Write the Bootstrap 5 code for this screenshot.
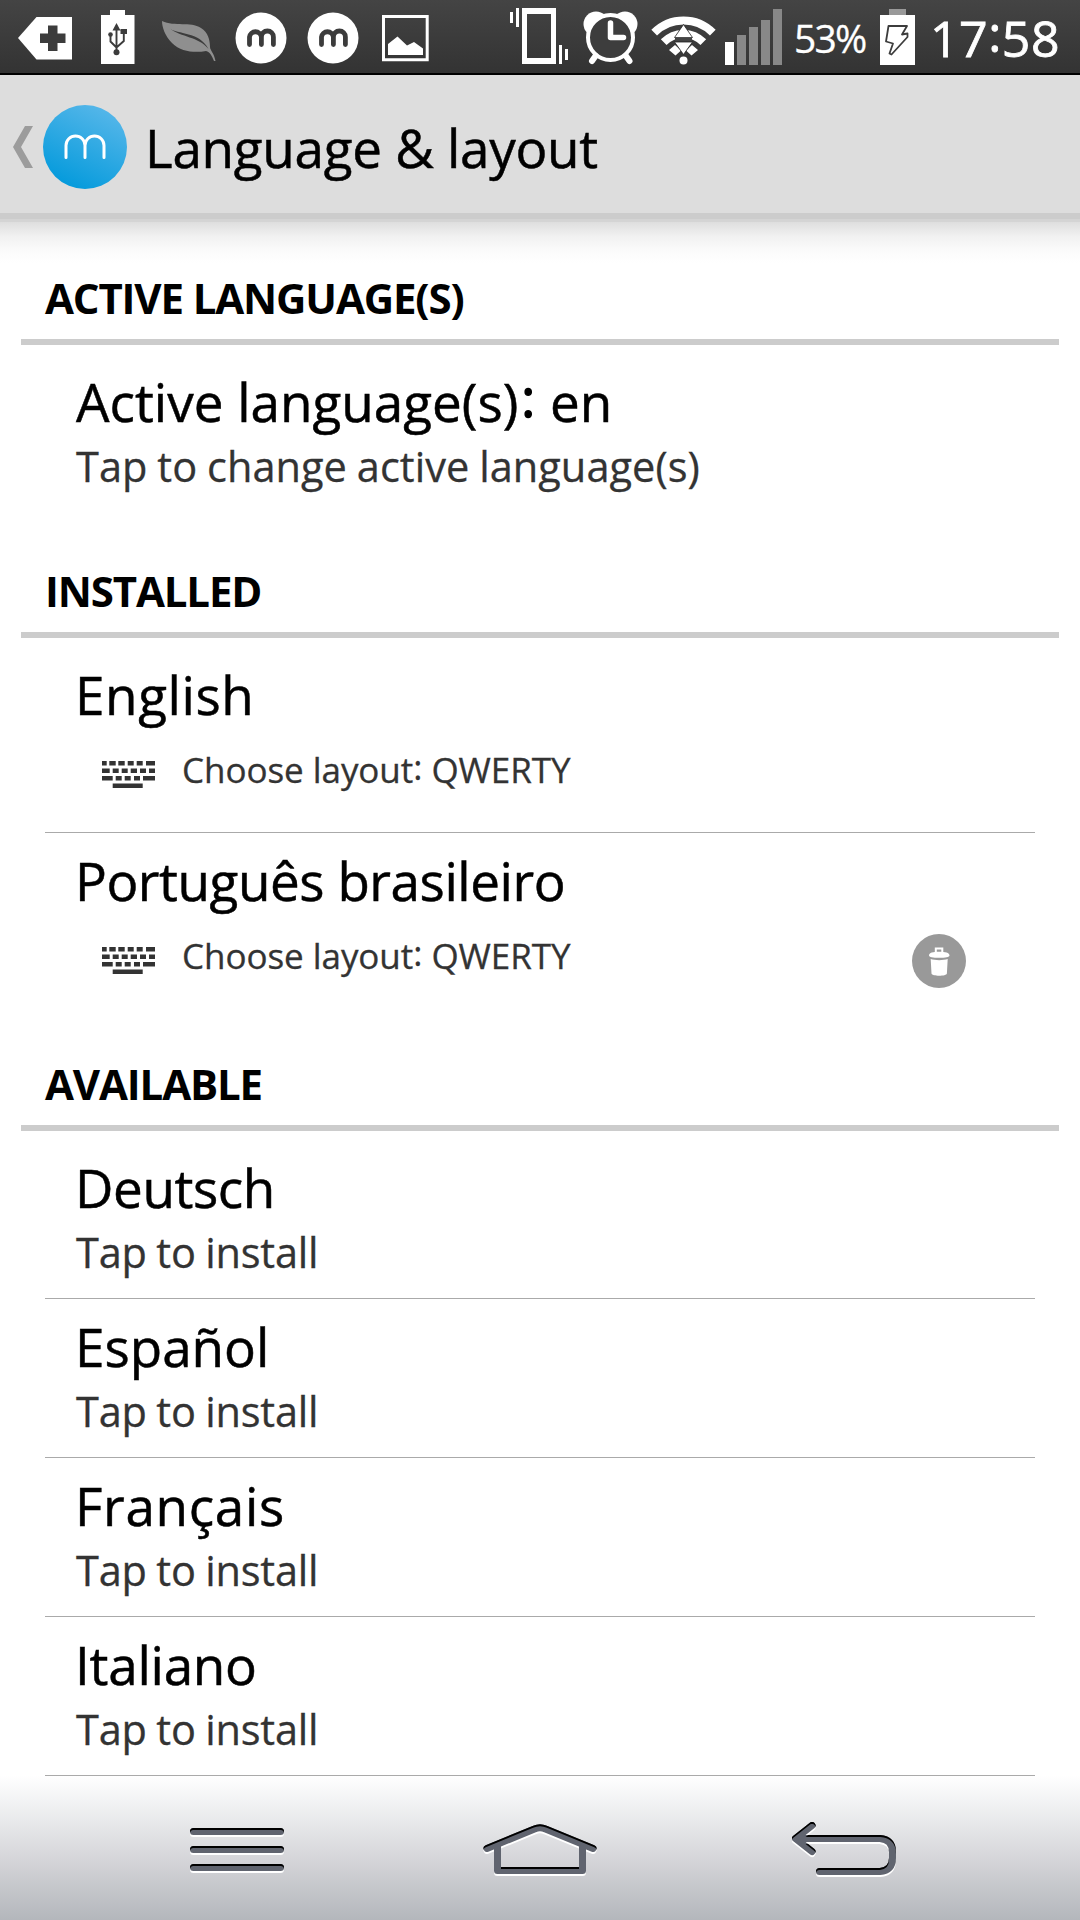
<!DOCTYPE html>
<html lang="en">
<head>
<meta charset="utf-8">
<meta name="viewport" content="width=device-width, initial-scale=1">
<title>Language &amp; layout</title>
<link href="https://cdn.jsdelivr.net/npm/bootstrap@5.3.0/dist/css/bootstrap.min.css" rel="stylesheet">
<script src="https://cdn.jsdelivr.net/npm/bootstrap@5.3.0/dist/js/bootstrap.bundle.min.js" defer></script>
<style>
body{font-family:"Open Sans","Noto Sans",sans-serif;color:#000;background:#fff}
.screen{width:1080px;height:1920px}
svg{display:block;flex:none}
.statusbar{height:75px;background:linear-gradient(#444,#333);border-bottom:2px solid #000;color:#fff}
.pct{font-size:39px;line-height:75px;letter-spacing:-1.8px;width:83px;margin-left:9px;-webkit-text-stroke:.3px}
.clock{font-size:50px;line-height:76px;margin-left:10px;letter-spacing:.5px;-webkit-text-stroke:.8px}
.up{vertical-align:.1em;line-height:0}
.appbar{height:147px;background:#ddd;border-bottom:3px solid #d4d4d4;box-shadow:inset 0 -6px #ccc}
.appbar h1{font-size:53px;line-height:72px;margin:1px 0 0 13px;letter-spacing:-.28px;-webkit-text-stroke:.5px}
.fade-under{height:41px;background:linear-gradient(#dedede,#f1f1f1 35%,#fbfbfb 70%,#fff)}
.sec-head{height:82px;margin:0 21px;padding:6px 0 0 24px;border-bottom:6px solid #ccc;font-size:42px;line-height:57px;font-weight:700;letter-spacing:-1.15px}
.rows{margin:0 45px;padding-top:9px}
.rowitem{height:159px;border-bottom:1px solid #aaa;padding:18px 0 0 31px}
.rowitem.tall{height:186px}
.rowitem.single{height:202px;border:0}
.rowitem.closing{height:216px;border:0}
.ttl{font-size:53px;line-height:60px;margin-left:-1px;-webkit-text-stroke:.5px}
.single .ttl{margin-left:0}
.single .up{margin:0 1px 0 3px;-webkit-text-stroke:1.5px}
.sub{font-size:41.5px;line-height:56px;margin-top:6px;color:#333;letter-spacing:-.2px;word-spacing:-1px;-webkit-text-stroke:.3px}
.single .sub{letter-spacing:.05px}
.lay{height:48px;font-size:35px;line-height:48px;color:#333;margin:21px 69px 0 26px;letter-spacing:-.05px;-webkit-text-stroke:.3px}
.lay .kbd-icon{margin:9px 27px 0 0}
.lay .bin{margin:-8px 0}
.ls-en{letter-spacing:.6px}.ls-pt{letter-spacing:-.45px}.ls-de{letter-spacing:-.4px}.ls-es{letter-spacing:0}.ls-fr{letter-spacing:.7px}.ls-it{letter-spacing:-.25px}
.navstrip{background:linear-gradient(#fff 0,#e9eaec 30%,#d3d3d7 61%,#c6c8cc 76%,#b4b7bc)}
</style>
</head>
<body>
<svg width="0" height="0" class="position-absolute" aria-hidden="true"><defs>
<symbol id="mdot" viewBox="225 0 72 73"><circle cx="261" cy="38" r="25.500" fill="#fff"/><path fill="none" stroke="#3c3c3c" stroke-width="4.800" stroke-linecap="round" d="M249.500 44.500V37a6 6 0 0 1 11.900 0V44.500M261.400 37a6 6 0 0 1 12 0V44.500"/></symbol>
<symbol id="keys" viewBox="0 0 53 27"><path fill="#333" d="M0 0h4.700v4.500H0zM7.300 0h6.400v4.500H7.300zM16.300 0h6.400v4.500h-6.400zM25.700 0h6v4.500h-6zM34.700 0h6v4.500h-6zM44 0h9v4.500h-9zM0 7.500h7.700V12H0zM10.700 7.500h6V12h-6zM19.700 7.500h6V12h-6zM28.700 7.500H35V12h-6.300zM38 7.500h6V12h-6zM47 7.500h6V12h-6zM0 15h10.700v4.500H0zM13.700 15h6v4.500h-6zM22.700 15h6v4.500h-6zM32 15h6v4.500h-6zM41 15h12v4.500H41zM10.700 22.500h30V27h-30z"/></symbol>
<filter id="emboss" filterUnits="userSpaceOnUse" x="0" y="1776" width="1080" height="144" color-interpolation-filters="sRGB">
<feOffset in="SourceAlpha" dy="2" result="down"/>
<feFlood flood-color="#fff"/><feComposite in2="down" operator="in" result="white"/>
<feFlood flood-color="#000"/><feComposite in2="SourceAlpha" operator="in" result="blk"/><feComposite in="blk" in2="down" operator="out" result="edge"/>
<feMerge><feMergeNode in="white"/><feMergeNode in="SourceGraphic"/><feMergeNode in="edge"/></feMerge>
</filter></defs></svg>
<div class="screen d-flex flex-column overflow-hidden">
<header class="statusbar d-flex flex-shrink-0">
<svg width="90" height="73" viewBox="0 0 90 73"><path fill="#fff" d="M18 38 36.500 17H72V59.500H36.500Z"/><path fill="#3c3c3c" d="M48 25.500h9.500v8h8V43h-8v8H48v-8h-8v-9.500h8z"/></svg>
<svg width="60" height="73" viewBox="90 0 60 73"><path fill="#fff" d="M110 10h15v5h9.500v49H101V15h9z"/><g fill="none" stroke="#3c3c3c" stroke-width="1.900"><path d="M116.500 28V51M110.500 35v6.500l6 6M123.800 33v8l-7.300 6.500"/></g><g fill="#3c3c3c"><path d="M112.500 30.500 116.500 23l4 7.500zM120.500 29h6.500v5h-6.500z"/><circle cx="116.500" cy="52.300" r="3"/><circle cx="110.500" cy="34.500" r="2.300"/></g></svg>
<svg width="75" height="73" viewBox="150 0 75 73"><path fill="#8f8f8f" d="M162 21C175 27 190 21 201 28C208 32 210 40 210 47C210 50 214 53 215.500 61L214 61C212 56 210 52 206 51C195 53 181 52 172 43C165 36 162 27 162 21Z"/><path fill="#3c3c3c" d="M169 28C178 35 199 31 208.500 49C198 36 182 38 169 28Z"/></svg>
<svg width="72" height="73"><use href="#mdot"/></svg>
<svg width="72" height="73"><use href="#mdot"/></svg>
<svg width="131" height="73" viewBox="369 0 131 73"><path fill="none" stroke="#fff" stroke-width="3" d="M383.500 16.500h43.700v43.200h-43.700z"/><path fill="#fff" d="M388 55V44l9.500-7.500 9.500 9 7-3.500 9 6.500V55z"/></svg>
<svg width="75" height="73" viewBox="500 0 75 73"><path fill="#fff" fill-rule="evenodd" d="M522 8h34v56h-34zM527 14v44h24V14zM510 12h3v11h-3zM516 8h3v19h-3zM559 45h3v19h-3zM565 49h3v11h-3z"/></svg>
<svg width="70" height="73" viewBox="575 0 70 73"><g fill="#fff"><circle cx="596" cy="24" r="12.500"/><circle cx="625" cy="24" r="12.500"/></g><circle cx="610.500" cy="37.500" r="22.500" fill="#3d3d3d" stroke="#fff" stroke-width="4"/><path fill="none" stroke="#fff" stroke-width="6" stroke-linecap="round" d="M592 61 595.500 56M629.500 61 626 56"/><path fill="none" stroke="#fff" stroke-width="5.500" stroke-linecap="round" stroke-linejoin="round" d="M610.500 23V37.500H623.500"/></svg>
<svg width="75" height="73" viewBox="645 0 75 73"><path fill="none" stroke="#fff" stroke-width="8" d="M654.200 32.700a41.400 41.400 0 0 1 58.600 0M663.700 42.200a28 28 0 0 1 39.600 0"/><path fill="#fff" d="M669 50l6-5 6 5.500-5.500 5zM698 50l-6-5-6 5.500 5.500 5z"/><circle cx="683.500" cy="60.500" r="4" fill="#fff"/><path fill="#444" d="M675 38h17v3.500h-17z"/><path fill="#fff" stroke="#222" stroke-width=".8" d="M683.500 24.500 692.500 37.500H674.500ZM674.500 42H692.500L683.500 54.500Z"/></svg>
<svg width="65" height="73" viewBox="720 0 65 73"><path fill="#fff" d="M725 42h9v23h-9z"/><path fill="#888" d="M737 35h9v30h-9zM749 27h9v38h-9zM761 20h9v45h-9zM773 9h9v56h-9z"/></svg>
<span class="pct text-nowrap">53%</span>
<svg width="43" height="73" viewBox="877 0 43 73"><path fill="#999" d="M889 9h17v6h-17z"/><path fill="#fff" d="M880 15h35v50h-35z"/><path fill="none" stroke="#3c3c3c" stroke-width="1.800" stroke-linejoin="round" d="M888.500 26H907L902 34.500 907.500 33.500 907.500 37 891.500 54.500 889.500 53.500 893 43.500 886 41.500Z"/></svg>
<span class="clock text-nowrap">17<span class="up">:</span>58</span>
</header>
<div class="appbar d-flex align-items-center flex-shrink-0">
<svg class="align-self-start" width="132" height="138" viewBox="0 75 132 138"><defs><linearGradient id="g" x1=".75" y1=".05" x2=".3" y2=".95"><stop stop-color="#54b6e9"/><stop offset="1" stop-color="#069bdc"/></linearGradient></defs><path fill="#9c9c9c" d="M25 126h8L21 147l12 21h-8L13 147z"/><circle cx="85" cy="147" r="42" fill="url(#g)"/><path fill="none" stroke="#fff" stroke-width="3" stroke-linecap="round" d="M66 157.500V145.500a9.500 9.500 0 0 1 19 0V157.500M85 145.500a9.500 9.500 0 0 1 19 0V157.500"/></svg>
<h1 class="text-nowrap">Language &amp; layout</h1>
</div>
<div class="fade-under flex-shrink-0"></div>
<main class="flex-shrink-0">
<h2 class="sec-head">ACTIVE LANGUAGE(S)</h2>
<div class="rows">
<div class="rowitem single"><div class="ttl">Active language(s)<span class="up">:</span> en</div><div class="sub">Tap to change active language(s)</div></div>
</div>
<h2 class="sec-head">INSTALLED</h2>
<div class="rows">
<div class="rowitem tall"><div class="ttl ls-en">English</div><div class="lay d-flex align-items-center"><svg class="kbd-icon" width="53" height="27"><use href="#keys"/></svg><span>Choose layout<span class="up">:</span> QWERTY</span></div></div>
<div class="rowitem closing"><div class="ttl ls-pt">Português brasileiro</div><div class="lay d-flex align-items-center"><svg class="kbd-icon" width="53" height="27"><use href="#keys"/></svg><span>Choose layout<span class="up">:</span> QWERTY</span>
<svg class="bin ms-auto" width="54" height="64" viewBox="0 0 54 64"><circle cx="27" cy="37" r="27" fill="#999"/><path fill="none" stroke="#fff" stroke-width="2" d="M23.800 29V24.500h6.500V29"/><path fill="#fff" d="M17 31.500c0-3 4-3.800 10.200-3.800s10.300.8 10.300 3.800c0 1.500-4 2.300-10.300 2.300S17 33 17 31.500zM18.700 35c4 1.500 13 1.500 17 0l-.8 14.500c-.2 3-15.200 3-15.400 0z"/></svg></div></div>
</div>
<h2 class="sec-head">AVAILABLE</h2>
<div class="rows">
<div class="rowitem"><div class="ttl ls-de">Deutsch</div><div class="sub">Tap to install</div></div>
<div class="rowitem"><div class="ttl ls-es">Español</div><div class="sub">Tap to install</div></div>
<div class="rowitem"><div class="ttl ls-fr">Français</div><div class="sub">Tap to install</div></div>
<div class="rowitem"><div class="ttl ls-it">Italiano</div><div class="sub">Tap to install</div></div>
</div>
</main>
<nav class="navstrip d-flex flex-fill">
<svg width="360" height="144" viewBox="0 1776 360 144"><g filter="url(#emboss)"><path stroke="#60646f" stroke-width="7" stroke-linecap="round" d="M193.500 1831.500h87M193.500 1849.500h87M193.500 1867.500h87"/></g></svg>
<svg width="360" height="144" viewBox="360 1776 360 144"><g filter="url(#emboss)" fill="none" stroke="#60646f" stroke-width="7" stroke-linejoin="round"><path stroke-linecap="round" d="M487 1848.500 534.500 1829Q540 1826.500 545.500 1829L593 1848.500"/><path d="M497.500 1845V1870.500H582.500V1845"/></g></svg>
<svg width="360" height="144" viewBox="720 1776 360 144"><g filter="url(#emboss)" fill="none" stroke="#60646f" stroke-width="7" stroke-linecap="round" stroke-linejoin="round"><path d="M812 1825.500 795.500 1838.500 812 1851.500M800 1838.500H880Q892.500 1839.500 892.500 1852V1858Q892.500 1870.500 880 1871.500H819.500"/></g></svg>
</nav>
</div>
</body>
</html>
